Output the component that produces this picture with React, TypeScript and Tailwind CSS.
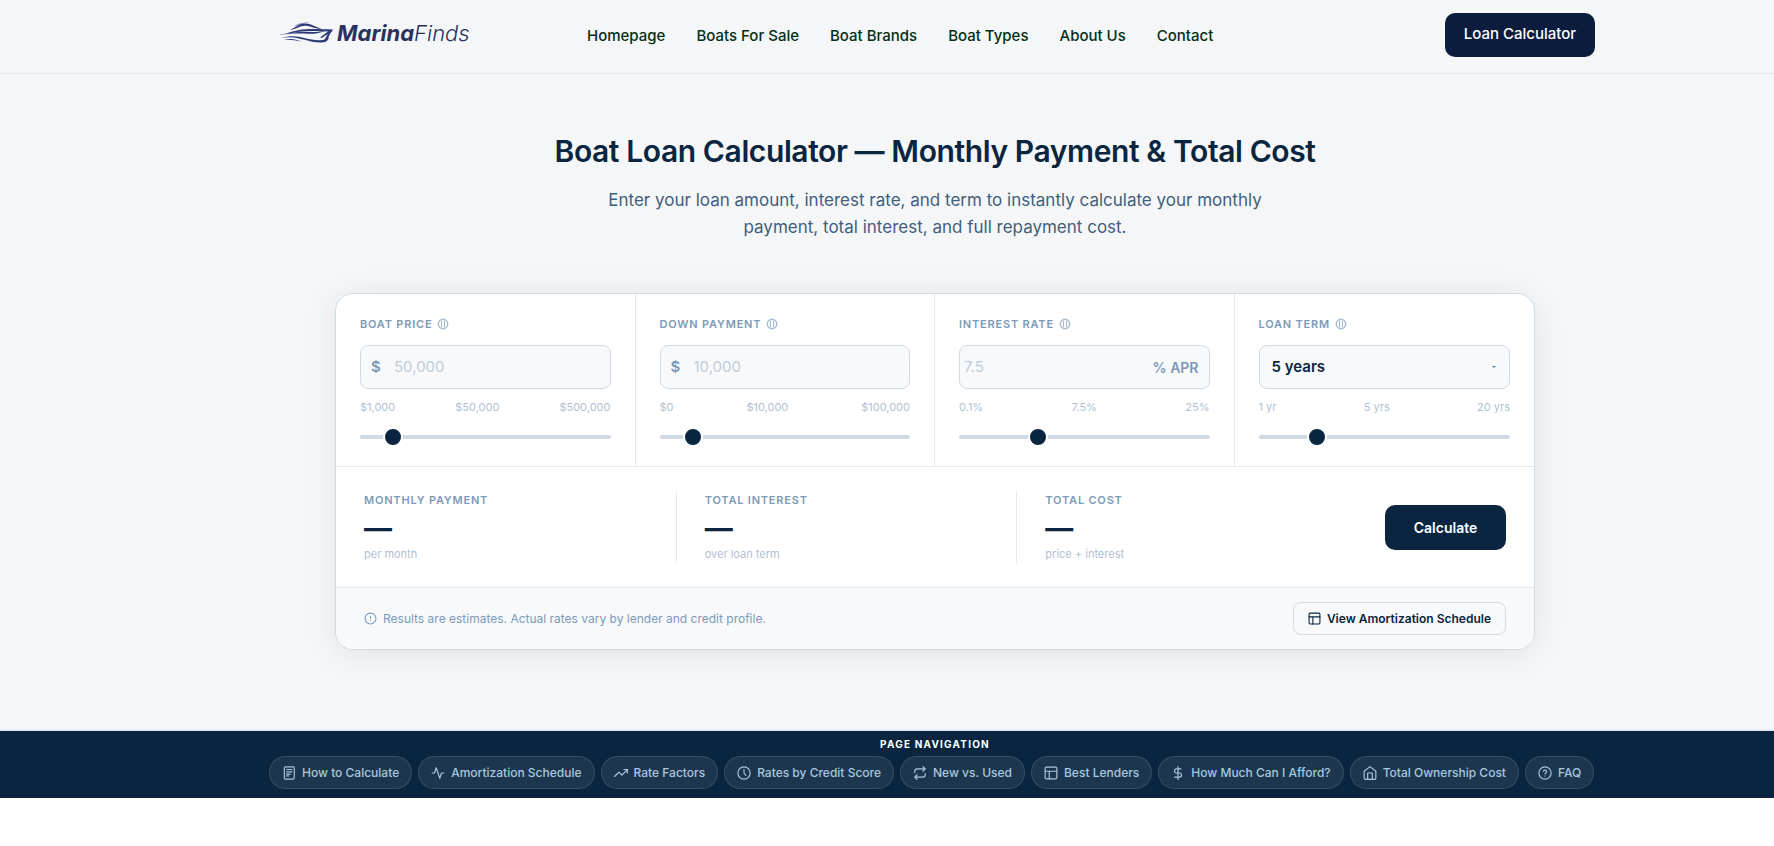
import { useState } from 'react';
import type { ReactNode } from 'react';

const navLinks = ['Homepage', 'Boats For Sale', 'Boat Brands', 'Boat Types', 'About Us', 'Contact'];

type Field = {
  id: string;
  label: string;
  ticks: string[];
  min: number;
  max: number;
  start: number;
};

const fields: Field[] = [
  { id: 'price', label: 'Boat Price', ticks: ['$1,000', '$50,000', '$500,000'], min: 1000, max: 500000, start: 50000 },
  { id: 'down', label: 'Down Payment', ticks: ['$0', '$10,000', '$100,000'], min: 0, max: 100000, start: 10000 },
  { id: 'rate', label: 'Interest Rate', ticks: ['0.1%', '7.5%', '25%'], min: 0, max: 250, start: 75 },
  { id: 'term', label: 'Loan Term', ticks: ['1 yr', '5 yrs', '20 yrs'], min: 1, max: 20, start: 5 },
];

const results = [
  { label: 'Monthly Payment', note: 'per month' },
  { label: 'Total Interest', note: 'over loan term' },
  { label: 'Total Cost', note: 'price + interest' },
];

const sections: { label: string; icon: ReactNode }[] = [
  { label: 'How to Calculate', icon: <><rect x="4" y="1.500" width="17" height="21" rx="2" /><path d="M8 6h9M8 10h9M8 14h6M8 17h3" /></> },
  { label: 'Amortization Schedule', icon: <path d="M22 12h-4l-3 9L9 3l-3 9H2" /> },
  { label: 'Rate Factors', icon: <path d="m23 6-9.500 9.500-5-5L1 18M17 6h6v6" /> },
  { label: 'Rates by Credit Score', icon: <><circle cx="12" cy="12" r="10.500" /><path d="M12 6v6l3 4" /></> },
  { label: 'New vs. Used', icon: <path d="m17 1 4 4-4 4M3 11V9a4 4 0 0 1 4-4h14M7 23l-4-4 4-4M21 13v2a4 4 0 0 1-4 4H3" /> },
  { label: 'Best Lenders', icon: <><rect x="2" y="2" width="20" height="20" rx="2" /><path d="M2 9h20M9 22V9" /></> },
  { label: 'How Much Can I Afford?', icon: <path d="M12 1v22M17 5H9.500a3.500 3.500 0 0 0 0 7h5a3.500 3.500 0 0 1 0 7H6" /> },
  { label: 'Total Ownership Cost', icon: <><path d="m2 9 10-8 10 8v12a2 2 0 0 1-2 2H4a2 2 0 0 1-2-2z" /><path d="M8 23V12h8v11" /></> },
  { label: 'FAQ', icon: <><circle cx="12" cy="12" r="10.500" /><path d="M9.090 9a3 3 0 0 1 5.830 1c0 2-3 3-3 3M12 17h.01" /></> },
];

function Icon({ className, children }: { className: string; children: ReactNode }) {
  return (
    <svg
      viewBox="0 0 24 24"
      fill="none"
      stroke="currentColor"
      strokeWidth="2"
      strokeLinecap="round"
      strokeLinejoin="round"
      aria-hidden="true"
      className={className}
    >
      {children}
    </svg>
  );
}

function Logo() {
  return (
    <a href="#" className="flex items-center gap-0.5 text-[#2a3160]">
      <svg viewBox="0 0 56 22" className="h-[22px] w-14" fill="#2e3a78" aria-hidden="true">
        <path d="M11 8C17 5 20 1.500 26 1.500c6 0 9 3 17 5.500-9-.6-12-3.200-17-3.200-5 0-8 3.200-15 4.200z" />
        <path d="M15 4.500C20 1 25 0 32 1.200 25 .8 21 2 15 4.500z" />
        <path d="M6 12.500C18 6 32 6.500 54 7.500c-3 4-4 6-5 9-1 2-2 3-5 3 2-2 4-7 6.500-10C34 8.500 20 8.500 6 12.500z" />
        <path d="M0 13c14-3.500 22-3 32-3 6 0 10-.4 15-1.200-8 2.700-12 3.200-18 3-8-.2-18-.8-29 1.200z" />
        <path d="M2 16c16-5 24 2 38 2.200 5 .1 8-1 10-3-1 4-4 5.300-9 5.300C28 20.500 18 13 2 16z" />
        <path d="M4 18c7-2 13-1 19 1.800-6-1.300-12-2.300-19-1.800z" />
        <path d="m51 8-10 7.500 1.700.5L53.500 9z" />
      </svg>
      <span className="font-[Inter,sans-serif] text-[22px] leading-8 italic [font-feature-settings:'cv11']">
        <b className="font-bold">Marina</b>
        <span className="font-light">Finds</span>
      </span>
    </a>
  );
}

function Header() {
  return (
    <header className="border-b border-[#e5e7eb] pl-24">
      <div className="mx-auto flex h-[73px] max-w-[1332px] items-center justify-between pr-1.5 pb-1">
        <div className="w-[318px] pb-1 pl-2.5">
          <Logo />
        </div>
        <nav className="flex flex-1 gap-[31px] pt-1">
          {navLinks.map((link) => (
            <a key={link} href="#" className="text-[15px] font-medium whitespace-nowrap text-[#052e16]">
              {link}
            </a>
          ))}
        </nav>
        <button type="button" className="h-11 w-[150px] rounded-[10px] bg-[#0b1c3d] text-[15px] font-medium text-white">
          Loan Calculator
        </button>
      </div>
    </header>
  );
}

function InfoIcon() {
  return (
    <svg viewBox="0 0 12 12" className="size-3 text-[#a9bccf]" fill="none" stroke="currentColor" aria-hidden="true">
      <circle cx="6" cy="6" r="4.700" strokeWidth="1.500" />
      <path d="M4.500 2.500v7M7.500 2.500v7" strokeWidth="1.200" />
    </svg>
  );
}

const inputStyle = 'w-full min-w-0 bg-transparent text-[15px] font-normal text-[#0a2540] outline-none placeholder:text-[#c0ccda]';

function Control({ id }: { id: string }) {
  if (id === 'term') {
    return (
      <div className="relative">
        <select
          id={id}
          defaultValue="5"
          className="h-11 w-full appearance-none rounded-lg border border-[#d0d9e4] bg-[#f7f9fb] px-3 text-[15px] font-semibold text-[#0a2540]"
        >
          <option value="1">1 year</option>
          <option value="5">5 years</option>
          <option value="10">10 years</option>
          <option value="20">20 years</option>
        </select>
        <svg viewBox="0 0 4 2" className="pointer-events-none absolute top-5 right-3.5 mt-px h-0.5 w-1" aria-hidden="true">
          <path d="M0 0h4L2 2z" fill="#5f83a6" />
        </svg>
      </div>
    );
  }
  return (
    <div className="flex h-11 items-center rounded-lg border border-[#d0d9e4] bg-[#f7f9fb] text-[15px] font-semibold text-[#7d9ab8]">
      {id === 'rate' ? (
        <>
          <input id={id} placeholder="7.5" className={`${inputStyle} pl-1`} />
          <span className="pr-2.5 text-[14px] whitespace-nowrap">% APR</span>
        </>
      ) : (
        <>
          <span className="w-[33px] shrink-0 pl-2.5">$</span>
          <input id={id} placeholder={id === 'price' ? '50,000' : '10,000'} className={inputStyle} />
        </>
      )}
    </div>
  );
}

function LoanField({ field }: { field: Field }) {
  const [value, setValue] = useState(field.start);

  return (
    <div className="border-r border-[#e2e9f0] px-6 pt-6 pb-[27px] last:border-r-0">
      <div className="flex items-center gap-[5px]">
        <label htmlFor={field.id} className="text-[11px] leading-3 font-semibold tracking-[0.8px] text-[#7d9ab8] uppercase">
          {field.label}
        </label>
        <InfoIcon />
      </div>
      <div className="mt-[15px]">
        <Control id={field.id} />
      </div>
      <div className="mt-2.5 flex justify-between text-[11px] leading-4 text-[#b0c0d2]">
        {field.ticks.map((tick) => (
          <span key={tick}>{tick}</span>
        ))}
      </div>
      <input
        type="range"
        aria-label={field.label}
        min={field.min}
        max={field.max}
        value={value}
        onChange={(e) => setValue(Number(e.target.value))}
        className="mt-5 block h-1 w-full appearance-none rounded-sm bg-[#d0d9e4] [&::-webkit-slider-thumb]:size-5 [&::-webkit-slider-thumb]:appearance-none [&::-webkit-slider-thumb]:rounded-full [&::-webkit-slider-thumb]:border-2 [&::-webkit-slider-thumb]:border-white [&::-webkit-slider-thumb]:bg-[#0a2540]"
      />
    </div>
  );
}

function Calculator() {
  return (
    <div className="mx-auto mt-13 max-w-[1200px] overflow-hidden rounded-[18px] border border-[#d0dbe6] bg-white shadow-[0_4px_32px_rgba(10,37,64,0.08)]">
      <div className="grid grid-cols-4 border-b border-[#e2e9f0]">
        {fields.map((field) => (
          <LoanField key={field.id} field={field} />
        ))}
      </div>

      <div className="flex items-center gap-7 px-7 py-6">
        <div className="flex flex-1">
          {results.map((result) => (
            <div key={result.label} className="h-[72px] flex-1 border-r border-[#e2e9f0] pl-7 first:pl-0 last:border-r-0">
              <div className="pt-[3px] text-[11px] leading-3 font-semibold tracking-[0.8px] text-[#7d9ab8] uppercase">{result.label}</div>
              <div className="mt-1.5 text-[28px] leading-8 font-bold text-[#0a2540]">—</div>
              <div className="mt-0.5 text-[11px] leading-4 text-[#b0c0d2]">{result.note}</div>
            </div>
          ))}
        </div>
        <button type="button" className="h-[45px] w-[121px] rounded-[10px] bg-[#0a2540] text-[14px] font-semibold text-white">
          Calculate
        </button>
      </div>

      <div className="flex items-center justify-between border-t border-[#e2e9f0] bg-[#f7f9fb] px-7 py-3.5">
        <p className="flex items-center gap-1.5 text-[12px] text-[#7d9ab8]">
          <Icon className="size-[13px]">
            <circle cx="12" cy="12" r="10" />
            <path d="M12 8v4M12 16h.01" />
          </Icon>
          Results are estimates. Actual rates vary by lender and credit profile.
        </p>
        <button type="button" className="flex h-[33px] items-center gap-1.5 rounded-lg border border-[#d0dbe6] px-3.5 text-[12px] font-semibold text-[#0a2540]">
          <Icon className="size-[13px]">
            <rect x="2" y="2" width="20" height="20" rx="2" />
            <path d="M2 9h20M9 22V9" />
          </Icon>
          View Amortization Schedule
        </button>
      </div>
    </div>
  );
}

function PageNavigation() {
  return (
    <nav aria-label="Page navigation" className="border-t border-[#d0e4ea] bg-[#0a2540] pl-24">
      <div className="mx-auto max-w-[1332px] pt-[7px] pb-[9px]">
        <h2 className="text-center text-[10px] leading-3 font-bold tracking-[1.2px] text-white uppercase">Page Navigation</h2>
        <div className="mt-1.5 flex gap-1.5">
          {sections.map((section) => (
            <a
              key={section.label}
              href="#"
              className="flex h-[33px] items-center gap-1.5 rounded-full border border-white/12 bg-white/8 px-3 text-[12px] font-medium whitespace-nowrap text-[#a8c8dc]"
            >
              <Icon className="size-3.5">{section.icon}</Icon>
              {section.label}
            </a>
          ))}
        </div>
      </div>
    </nav>
  );
}

export default function App() {
  return (
    <div className="min-h-screen bg-white font-[Inter,sans-serif]">
      <div className="bg-[#f4f6f8]">
        <Header />
        <main className="pt-[57px] pb-20 pl-24">
          <h1 className="text-center text-[30px] leading-10 font-semibold tracking-[-0.4px] text-[#0a2540]">
            Boat Loan Calculator — Monthly Payment &amp; Total Cost
          </h1>
          <p className="mx-auto mt-4 max-w-[660px] text-center text-[17px] leading-[27px] text-[#425e7c]">
            Enter your loan amount, interest rate, and term to instantly calculate your monthly payment, total interest, and full repayment cost.
          </p>
          <Calculator />
        </main>
      </div>
      <PageNavigation />
    </div>
  );
}
